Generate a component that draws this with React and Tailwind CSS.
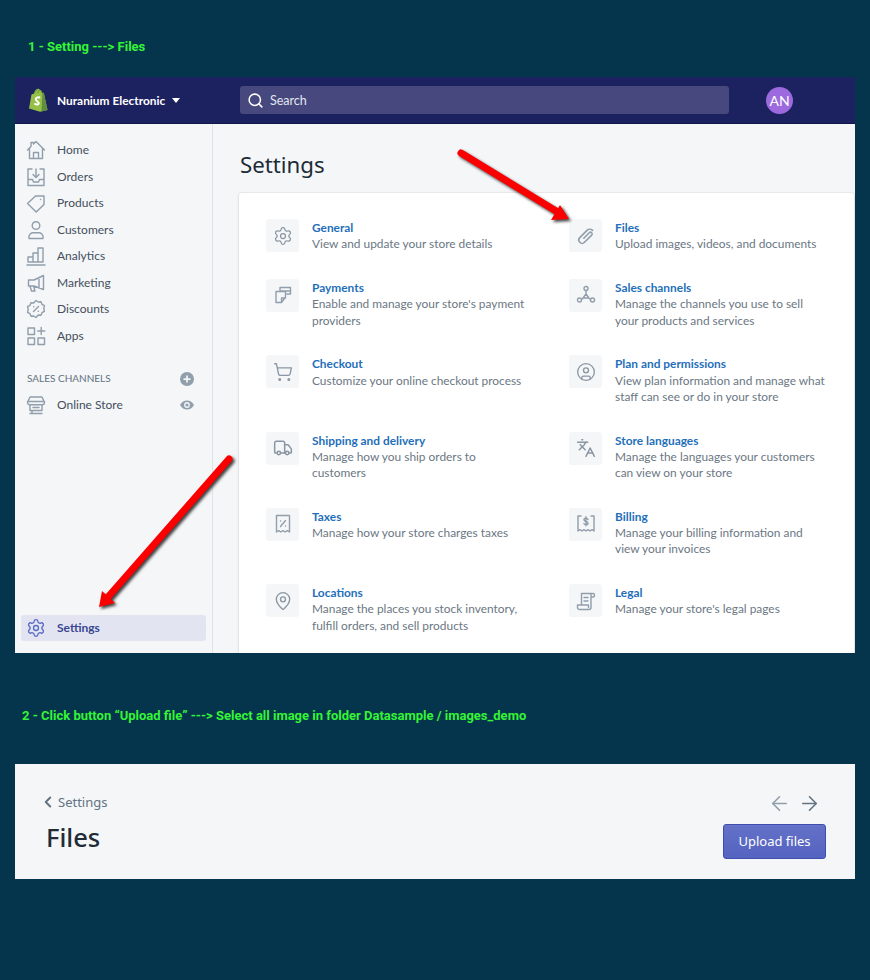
import { Search, Settings, MapPin, ShoppingCart, Languages, CircleUser, Truck, ChevronLeft, ArrowLeft, ArrowRight } from "lucide-react";

// small stroke icon wrapper, 20x20 grid
function Ico({ children, className = "w-5 h-5 text-[#919eab]", sw = 1.4 }) {
  return (
    <svg viewBox="0 0 20 20" fill="none" stroke="currentColor" strokeWidth={sw} strokeLinecap="round" strokeLinejoin="round" className={className}>
      {children}
    </svg>
  );
}

const HomeIco = () => <Ico><path d="M1.5 10L5 6.5V2.500h2.500v1.600L10 1.500l8.500 8.500M3.500 8.500V18.500h13V8.500M7.500 18.500v-6h5v6" /></Ico>;
const OrdersIco = () => <Ico><path d="M6 2H2v16.500h16V2h-4M2 12.500h4.500l1 2.500h5l1-2.500H18M10 2v8M7 7.500l3 3 3-3" /></Ico>;
const TagIco = () => <Ico><path d="M1.500 10.500L9.500 3h8.500v8.500l-7.800 7.500zM14.500 6.500h.1" /></Ico>;
const UserIco = () => <Ico><circle cx="10" cy="5.500" r="3.800" /><path d="M3 18.500v-2c0-2 2-3.700 4-3.700h6c2 0 4 1.700 4 3.700v2z" /></Ico>;
const ChartIco = () => <Ico><path d="M1 19h18M2 16v-5h5v5zM7 16V7h5v9zM12 16V2h5v14z" /></Ico>;
const MegaIco = () => <Ico><path d="M17.500 2.500v14L8 13H2.500V7H8zM13 4.500v10.500M4 13l1.500 5H9l-1.500-5" /></Ico>;
const DiscIco = () => <Ico><path d="M10 1.500l2.300 1.500 2.700-.2 1 2.500 2.400 1.400-.6 2.800.6 2.800-2.400 1.400-1 2.500-2.700-.2L10 18.500l-2.300-1.500-2.700.2-1-2.500-2.400-1.400.6-2.800-.6-2.800L4 6.300l1-2.500 2.700.2z" /><path d="M7.500 12.500l5-5M7.700 7.700h.1M12.300 12.300h.1" /></Ico>;
const AppsIco = () => <Ico><path d="M2 2h6.500v6.500H2zM2 12h6.500v6.500H2zM12 12h6.500v6.500H12zM15.200 1.500v7M11.800 5h7" /></Ico>;
const StoreIco = () => <Ico><path d="M4 2h12l2.500 5.500c0 1.500-1.200 2.300-2.500 2.300H4C2.700 9.800 1.500 9 1.500 7.500zM1.500 6.500h17M4 10v5.500h12V10M7 12.500h6M6 15.500v3M4 18.500h12" /></Ico>;

const ClipIco = () => <Ico sw={1.6}><path d="M7.800 12.200L13.300 6.700a1.700 1.700 0 0 1 2.400 2.400L8.500 16.300a3.300 3.300 0 0 1-4.700-4.700L11 4.400a4 4 0 0 1 5.600 0" /></Ico>;
const PayIco = () => <Ico><path d="M7 6V2.500h10.500V9h-3.500M7 6h10.500M3 6.500h9.500V12l-4 5.500H3zM8.500 17.500V13H12.500" /></Ico>;
const NodesIco = () => <Ico><circle cx="10" cy="3.500" r="2" /><circle cx="3.500" cy="15" r="2" /><circle cx="16.500" cy="15" r="2" /><path d="M10 5.500v3.500M7 13l3-4 3 4M5.500 14.500l2-1.500M14.500 14.500l-2-1.500M7 13h6" /></Ico>;
const TaxIco = () => <Ico><path d="M3.500 1.500h13V18l-2.200-1.300-2.100 1.300-2.200-1.300-2.200 1.300-2.100-1.300-2.200 1.300zM7.500 12.500l5-6M7.500 7h.1M12.500 12h.1" /></Ico>;
const BillIco = () => <Ico><path d="M5 2H2v15l2-1.300 2 1.300 2-1.300 2 1.300 2-1.300 2 1.300 2-1.300 2 1.300V2h-3" /><path d="M12 5.500c-.5-1-1.200-1.200-2-1.200-1.100 0-2 .6-2 1.500 0 2.200 4 1.200 4 3.400 0 .9-.9 1.500-2 1.500-.9 0-1.600-.3-2.100-1.200M10 2.800v9" /></Ico>;
const LegalIco = () => <Ico><path d="M5.500 14V2.500h11.500c1.200 0 1.500 1 1.500 1.700s-.5 1.800-1.500 1.800H15V14M15 14v2.500c0 1-1 2-2 2H3.500c-1.200 0-2-1-2-2V14h11v2.500M8 6.500h4M8 10h4M15 2.500v3" /></Ico>;

const navItems = [
  ["Home", HomeIco],
  ["Orders", OrdersIco],
  ["Products", TagIco],
  ["Customers", UserIco],
  ["Analytics", ChartIco],
  ["Marketing", MegaIco],
  ["Discounts", DiscIco],
  ["Apps", AppsIco],
];

const lu = "w-5 h-5 text-[#8a96a3]";
const settingRows = [
  [
    { title: "General", desc: ["View and update your store details"], icon: <Settings className={lu} strokeWidth={1.5} /> },
    { title: "Files", desc: ["Upload images, videos, and documents"], icon: <ClipIco /> },
  ],
  [
    { title: "Payments", desc: ["Enable and manage your store's payment", "providers"], icon: <PayIco /> },
    { title: "Sales channels", desc: ["Manage the channels you use to sell", "your products and services"], icon: <NodesIco /> },
  ],
  [
    { title: "Checkout", desc: ["Customize your online checkout process"], icon: <ShoppingCart className={lu} strokeWidth={1.6} /> },
    { title: "Plan and permissions", desc: ["View plan information and manage what", "staff can see or do in your store"], icon: <CircleUser className={lu} strokeWidth={1.6} /> },
  ],
  [
    { title: "Shipping and delivery", desc: ["Manage how you ship orders to", "customers"], icon: <Truck className={lu} strokeWidth={1.8} /> },
    { title: "Store languages", desc: ["Manage the languages your customers", "can view on your store"], icon: <Languages className={lu} strokeWidth={1.8} /> },
  ],
  [
    { title: "Taxes", desc: ["Manage how your store charges taxes"], icon: <TaxIco /> },
    { title: "Billing", desc: ["Manage your billing information and", "view your invoices"], icon: <BillIco /> },
  ],
  [
    { title: "Locations", desc: ["Manage the places you stock inventory,", "fulfill orders, and sell products"], icon: <MapPin className={lu} strokeWidth={1.6} /> },
    { title: "Legal", desc: ["Manage your store's legal pages"], icon: <LegalIco /> },
  ],
];

function ShopifyLogo() {
  return (
    <svg viewBox="0 0 20 24" className="w-5 h-6">
      <path d="M1 20.500L3.500 6.500 6 5.500C6.500 3 8 .8 10 .8c1 0 1.500.5 1.800 1.200 1.500 0 2.200 1.500 2.500 3l1.500-.3L19.500 22 12 23.800z" fill="#95bf47" />
      <path d="M14.300 5l1.500-.3L19.500 22 13.500 23.500 14.500 5z" fill="#5e8e3e" />
      <path d="M6.500 5.500C7 3.500 8 1.800 9.800 1.800M10 5C10 3.500 10.500 2 11.800 2c1.300 0 1.700 1.500 1.900 3" fill="none" stroke="#5e8e3e" strokeWidth="0.8" />
      <path d="M11.500 9.500C9.500 8.800 7.800 9.800 7.800 11.300c0 2 3 2.200 3 3.900 0 1.500-2 1.800-3.800.7" fill="none" stroke="#fff" strokeWidth="1.900" strokeLinecap="round" />
    </svg>
  );
}

function SettingCell({ title, desc, icon }) {
  return (
    <div className="flex">
      <div className="w-[33px] h-[33px] rounded-[3px] bg-[#f4f6f8] flex items-center justify-center shrink-0">{icon}</div>
      <div className="ml-[13px] pt-px text-[11.900px] leading-[16.300px] whitespace-nowrap font-['Lato',sans-serif]">
        <div className="font-bold text-[#1f6fba]">{title}</div>
        {desc.map((line) => (
          <div key={line} className="text-[#6b7783]">{line}</div>
        ))}
      </div>
    </div>
  );
}

// red annotation arrows sit on top of the screenshot
function RedArrow({ x1, y1, x2, y2, head }) {
  return (
    <svg className="absolute inset-0 w-[870px] h-[980px] pointer-events-none" viewBox="0 0 870 980" fill="none">
      <g className="drop-shadow-[2px_2px_1.500px_rgba(0,0,0,0.75)]">
        <line x1={x1} y1={y1} x2={x2} y2={y2} stroke="#fb0000" strokeWidth="7" strokeLinecap="round" />
        <polygon points={head} fill="#fb0000" />
      </g>
    </svg>
  );
}

export default function App() {
  return (
    <div className="relative w-[870px] h-[980px] bg-[#05344d] overflow-hidden font-['Noto_Sans','Open_Sans',sans-serif]">
      <div className="h-[77px] pl-7 pt-[39px] font-['Roboto',sans-serif] font-bold text-[13px] leading-[16px] text-[#35f435]">1 - Setting ---&gt; Files</div>

      {/* admin settings screen */}
      <div className="mx-[15px] w-[840px] h-[576px] bg-[#f4f6f8] flex flex-col overflow-hidden">
        <div className="h-[47px] shrink-0 bg-[#1c2260] border-b border-[#10154a] flex items-center font-['Lato',sans-serif]">
          <div className="w-[225px] pl-[13px] flex items-center shrink-0">
            <ShopifyLogo />
            <span className="ml-[9px] pt-px text-white text-[11.900px] font-bold whitespace-nowrap">Nuranium Electronic</span>
            <span className="ml-[7px] w-0 h-0 border-x-[4.500px] border-x-transparent border-t-[5px] border-t-white" />
          </div>
          <div className="w-[489px] h-[28px] rounded-[3px] bg-[#47497e] flex items-center pl-[7px] shrink-0">
            <Search className="w-[17px] h-[17px] text-white" strokeWidth={2.2} />
            <span className="ml-[6px] pt-[2px] text-[12.500px] text-[#e3e5f1]">Search</span>
          </div>
          <div className="ml-[37px] w-[27px] h-[27px] rounded-full bg-[#9c6ade] text-white text-[14px] flex items-center justify-center">AN</div>
        </div>

        <div className="flex flex-1 min-h-0">
          <aside className="w-[198px] shrink-0 border-r border-[#dfe3e8] flex flex-col justify-between pt-[13px] pb-[12px] font-['Lato',sans-serif]">
            <div>
              {navItems.map(([label, Icon]) => (
                <div key={label} className="h-[26.500px] flex items-center pl-[11px] text-[12px] text-[#454f5b]">
                  <span className="w-[20px] h-5 shrink-0"><Icon /></span>
                  <span className="ml-[11px]">{label}</span>
                </div>
              ))}
              <div className="mt-[16px] h-[27px] flex items-center justify-between pl-[12px] pr-[18px] text-[10px] text-[#637381]">
                <span>SALES CHANNELS</span>
                <svg viewBox="0 0 16 16" className="w-[14px] h-[14px]"><circle cx="8" cy="8" r="8" fill="#919eab" /><path d="M8 4v8M4 8h8" stroke="#f4f6f8" strokeWidth="2" /></svg>
              </div>
              <div className="h-[26.500px] flex items-center pl-[11px] pr-[18px] text-[12px] text-[#454f5b]">
                <span className="w-[20px] h-5 shrink-0"><StoreIco /></span>
                <span className="ml-[11px] flex-1">Online Store</span>
                <svg viewBox="0 0 16 16" className="w-[14px] h-[14px]"><path d="M0 8c2-3.600 4.800-5.200 8-5.200S14 4.400 16 8c-2 3.600-4.800 5.200-8 5.200S2 11.600 0 8z" fill="#919eab" /><circle cx="8" cy="8" r="3.300" fill="#f4f6f8" /><circle cx="8" cy="8" r="1.800" fill="#919eab" /></svg>
              </div>
            </div>
            <div className="mx-[6px] h-[26px] rounded-[3px] bg-[#e2e5f1] flex items-center pl-[5px] text-[12px] font-bold text-[#3a4691]">
              <Settings className="w-[20px] h-[20px] text-[#5c6ac4]" strokeWidth={1.6} />
              <span className="ml-[11px]">Settings</span>
            </div>
          </aside>

          <main className="flex-1 min-w-0 pl-[26px] pr-px pt-[25px]">
            <h1 className="ml-px text-[22.250px] leading-[32px] font-normal text-[#212b36]">Settings</h1>
            <div className="mt-[12px] rounded-[3px] bg-white shadow-[0_0_0_1px_rgba(63,63,68,0.05),0_1px_3px_0_rgba(63,63,68,0.15)] pt-[26px] pl-[27px] h-[500px]">
              {settingRows.map((row) => (
                <div key={row[0].title} className="grid grid-cols-[303px_1fr] pb-[26.400px]">
                  {row.map((item) => (
                    <SettingCell key={item.title} {...item} />
                  ))}
                </div>
              ))}
            </div>
          </main>
        </div>
      </div>

      <div className="h-[111px] pl-[22px] pt-[55px] font-['Roboto',sans-serif] font-bold text-[13px] leading-[16px] text-[#35f435]">2 - Click button “Upload file” ---&gt; Select all image in folder Datasample / images_demo</div>

      {/* files page header */}
      <div className="mx-[15px] w-[840px] h-[115px] bg-[#f4f6f8] flex justify-between pl-[29px] pr-[29px]">
        <div className="pt-[28px]">
          <div className="flex items-center text-[13px] leading-[20px] text-[#637381]">
            <ChevronLeft className="w-[18px] h-[18px] -ml-[5px] text-[#637381]" strokeWidth={2.6} />
            <span className="ml-px">Settings</span>
          </div>
          <h2 className="mt-[7px] ml-[2px] text-[25.500px] leading-[36px] font-medium text-[#212b36]">Files</h2>
        </div>
        <div className="flex flex-col items-end pt-[28px]">
          <div className="flex items-center gap-[7px] pr-[5px]">
            <ArrowLeft className="w-[23px] h-[23px] text-[#919eab]" strokeWidth={1.7} />
            <ArrowRight className="w-[23px] h-[23px] text-[#637381]" strokeWidth={1.7} />
          </div>
          <button className="mt-[9px] w-[103px] h-[35px] rounded-[3px] border border-[#3f4eae] bg-gradient-to-b from-[#6371c7] to-[#5563c1] text-white text-[13px] shadow-[inset_0_1px_0_0_#6774c8]">Upload files</button>
        </div>
      </div>

      <RedArrow x1={461} y1={153} x2={556} y2={211} head="569,219 551,220 560,205" />
      <RedArrow x1={229} y1={459} x2={108} y2={597} head="99,607 102,591 115,603" />
    </div>
  );
}
